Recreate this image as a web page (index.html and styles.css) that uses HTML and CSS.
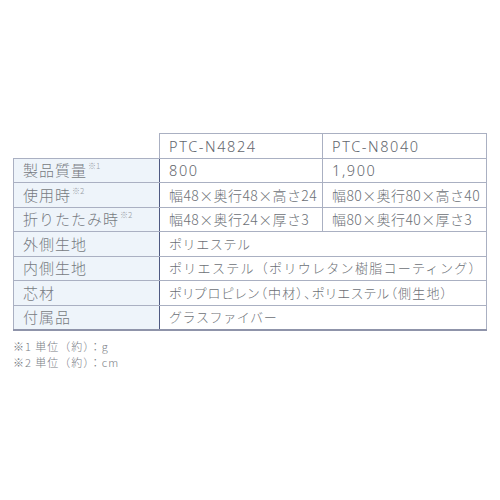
FILE: index.html
```html
<!DOCTYPE html>
<html lang="ja">
<head>
<meta charset="utf-8">
<link rel="stylesheet" href="styles.css">
</head>
<body>
<div class="page">
  <table class="spec">
    <colgroup>
      <col class="c1"><col class="c2"><col class="c3">
    </colgroup>
    <thead>
      <tr>
        <th class="blank"></th>
        <th class="model">PTC-N4824</th>
        <th class="model">PTC-N8040</th>
      </tr>
    </thead>
    <tbody>
      <tr><th class="label">製品質量<sup>※1</sup></th><td class="num">800</td><td class="num">1,900</td></tr>
      <tr><th class="label">使用時<sup>※2</sup></th><td>幅48×奥行48×高さ24</td><td>幅80×奥行80×高さ40</td></tr>
      <tr><th class="label">折りたたみ時<sup>※2</sup></th><td>幅48×奥行24×厚さ3</td><td>幅80×奥行40×厚さ3</td></tr>
      <tr><th class="label">外側生地</th><td colspan="2" class="wide">ポリエステル</td></tr>
      <tr><th class="label">内側生地</th><td colspan="2" class="wide loose">ポリエステル（ポリウレタン樹脂コーティング）</td></tr>
      <tr><th class="label">芯材</th><td colspan="2" class="wide tight">ポリプロピレン（中材）、ポリエステル（側生地）</td></tr>
      <tr class="last"><th class="label">付属品</th><td colspan="2" class="wide">グラスファイバー</td></tr>
    </tbody>
  </table>
  <div class="notes">
    <p>※1 単位（約）：g</p>
    <p>※2 単位（約）：cm</p>
  </div>
</div>
</body>
</html>
```
FILE: styles.css
```css
html, body {
  margin: 0;
  padding: 0;
  background: #ffffff;
}
.page {
  padding: 133px 14px 0 13px;
  font-family: "Noto Sans CJK JP", "Noto Sans", sans-serif;
  font-weight: 300;
  color: #6c7076;
}
.spec {
  border-collapse: collapse;
  width: 474px;
  table-layout: fixed;
}
.c1 { width: 146px; }
.c2 { width: 163px; }
.c3 { width: 164px; }
.spec tr { height: 24.5px; }
.spec th, .spec td {
  border: 1px solid #aab0c2;
  padding: 0 0 0 9px;
  text-align: left;
  font-weight: 300;
  white-space: nowrap;
  vertical-align: middle;
  line-height: 22px;
}
.spec .blank {
  border: none;
  border-right: 1px solid #aab0c2;
  border-bottom: 1px solid #aab0c2;
  background: transparent;
}
.model {
  font-size: 14.5px;
  letter-spacing: 1.6px;
  font-family: "Noto Sans", "Noto Sans CJK JP", sans-serif;
  color: #62666d;
}
.label {
  background: #eef4fa;
  font-size: 15px;
  letter-spacing: 1px;
  color: #777b82;
  border-right: 1px solid #4f5a82 !important;
}
.label sup {
  font-size: 8px;
  color: #9a9ea6;
  vertical-align: 7px;
  line-height: 0;
  letter-spacing: 0;
  margin-left: 1px;
}
td {
  font-size: 14px;
  letter-spacing: 0.4px;
}
td.num {
  font-size: 14.5px;
  letter-spacing: 1.6px;
  font-family: "Noto Sans", "Noto Sans CJK JP", sans-serif;
  color: #62666d;
}
td.wide {
  font-size: 13px;
  letter-spacing: 0.6px;
}
td.loose {
  letter-spacing: 1.3px;
}
td.tight {
  font-feature-settings: "palt";
  letter-spacing: 1.2px;
}
.spec tr.last th, .spec tr.last td {
  border-bottom: 2px solid #8f94aa;
}
.notes {
  margin-top: 7px;
  font-size: 11px;
  letter-spacing: 1px;
  color: #7a7e86;
}
.notes p {
  margin: 0;
  line-height: 16px;
}
```
